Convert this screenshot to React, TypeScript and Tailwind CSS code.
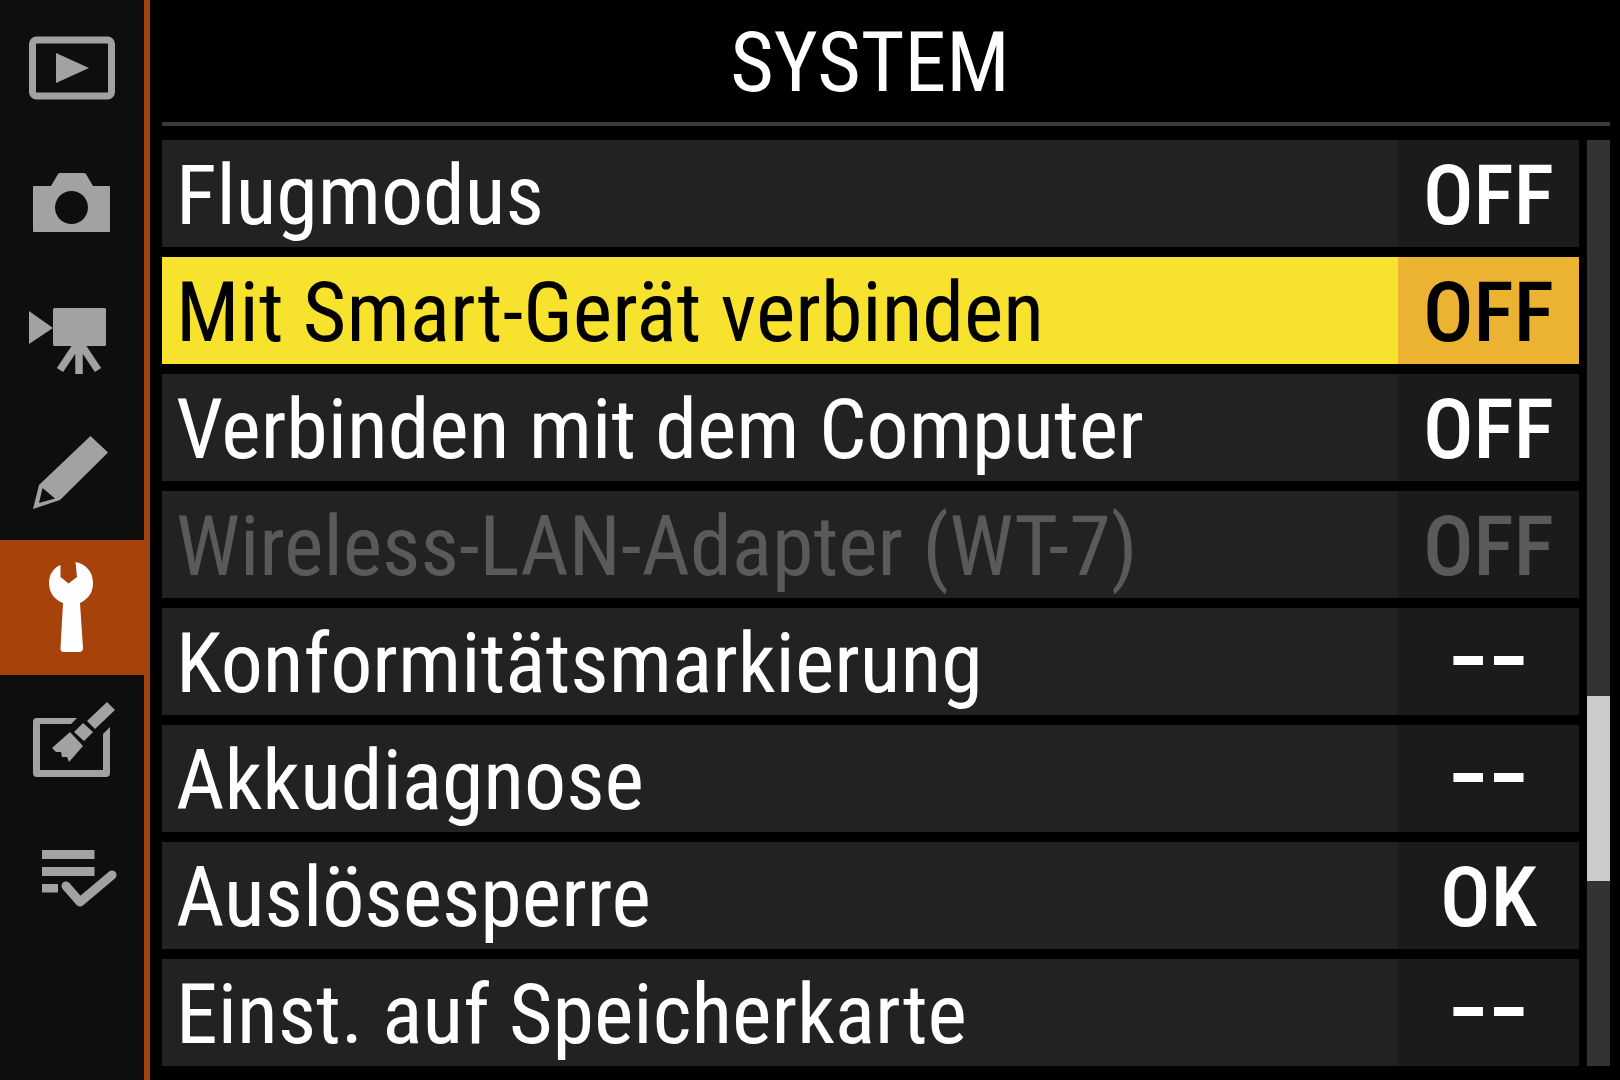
import type { ReactNode } from "react";

type Tab = { name: string; icon: ReactNode };
type Item = { label: string; value: string; state?: "selected" | "disabled" };

const tabs: Tab[] = [
  {
    name: "Wiedergabe",
    icon: (
      <>
        <rect x="32.500" y="40" width="79" height="56" rx="4" fill="none" stroke="currentColor" strokeWidth="7" />
        <path d="M56 53 89 68 56 83Z" />
      </>
    ),
  },
  {
    name: "Fotoaufnahme",
    icon: (
      <path
        fillRule="evenodd"
        d="M34 51H51L58 39Q59 38 60 38H83Q85 38 86 39L93 51H109Q110 51 110 52V96Q110 97 109 97H34Q33 97 33 96V52Q33 51 34 51ZM71.500 56A16.500 16.500 0 1 0 71.500 89A16.500 16.500 0 1 0 71.500 56Z"
      />
    ),
  },
  {
    name: "Videoaufnahme",
    icon: (
      <>
        <rect x="53" y="38" width="53" height="38" rx="1.500" />
        <path d="M29 41 53 58 29 74Z" />
        <path d="M79 72V104M78 73 60 100M80 73 98 100" fill="none" stroke="currentColor" strokeWidth="7.500" />
      </>
    ),
  },
  {
    name: "Individualfunktionen",
    icon: <path fillRule="evenodd" d="M33 104 39 80 90.500 31 108 47.500 60 95ZM42.500 83 39 98 55 93.500Z" />,
  },
  {
    name: "System",
    icon: (
      <path d="M60.500 25V37L68.500 43.500 77 37 75.500 22C86 24 93 32 93 43C93 53 88 59 80 63L83 108Q83 112 79 112H64Q60 112 60.500 108L63 63C55 60 49 53 49 43C49 35 53 28 60.500 25Z" />
    ),
  },
  {
    name: "Bildbearbeitung",
    icon: (
      <>
        <path d="M77 43H37Q33 43 33 47V98Q33 102 37 102H106Q110 102 110 98V52L103 59V95H40V49H71Z" />
        <path d="M107 27 115 35 95 54 87 46ZM83 48 93 57 84 66 74 57ZM70 57 83 71 69 87 67 82 62 82 61 77 56 77 52 73Z" />
      </>
    ),
  },
  {
    name: "Mein Menü",
    icon: (
      <>
        <path d="M42 40H94.500V49H42ZM42 57H94.500V66H42ZM42 74H58V82.500H42Z" />
        <path d="M66 76 80 92 112 65" fill="none" stroke="currentColor" strokeWidth="9" strokeLinecap="round" strokeLinejoin="round" />
      </>
    ),
  },
];

const items: Item[] = [
  { label: "Flugmodus", value: "OFF" },
  { label: "Mit Smart-Gerät verbinden", value: "OFF", state: "selected" },
  { label: "Verbinden mit dem Computer", value: "OFF" },
  { label: "Wireless-LAN-Adapter (WT-7)", value: "OFF", state: "disabled" },
  { label: "Konformitätsmarkierung", value: "--" },
  { label: "Akkudiagnose", value: "--" },
  { label: "Auslösesperre", value: "OK" },
  { label: "Einst. auf Speicherkarte", value: "--" },
];

function TabButton({ tab, active }: { tab: Tab; active: boolean }) {
  return (
    <button
      type="button"
      aria-label={tab.name}
      aria-current={active ? "page" : undefined}
      className={active ? "bg-[#a7420a] text-white" : "text-[#a2a2a2]"}
    >
      <svg viewBox="0 0 144 135" className="w-full" fill="currentColor" aria-hidden="true">
        {tab.icon}
      </svg>
    </button>
  );
}

function MenuRow({ item }: { item: Item }) {
  const selected = item.state === "selected";
  const disabled = item.state === "disabled";
  const tone = selected ? "bg-[#f7e22d] text-black" : disabled ? "bg-[#222222] text-[#5a5a5a]" : "bg-[#222222] text-white";
  const dash = item.value === "--";
  return (
    <li className="flex flex-1">
      <button type="button" disabled={disabled} className={`flex min-h-24 w-full items-stretch text-left ${tone}`}>
        <span className="flex flex-1 items-center pt-1 pl-3.5 text-[84px] leading-[88px] whitespace-nowrap">{item.label}</span>
        <span
          className={`flex w-[181px] items-center justify-center font-medium ${
            selected ? "bg-[#ebb331]" : "bg-[#1b1b1b]"
          } ${dash ? "pb-5 font-['DejaVu_Sans',sans-serif] text-[112px] leading-[80px]" : "pt-1 text-[84px] leading-[88px]"}`}
        >
          {item.value}
        </span>
      </button>
    </li>
  );
}

export default function App() {
  return (
    <div className="flex min-h-screen bg-black font-['Roboto_Condensed',Roboto,sans-serif] text-white">
      <nav aria-label="Menüs" className="grid w-[150px] shrink-0 grid-rows-8 border-r-[6px] border-[#a0430f] bg-[#0e0e0e]">
        {tabs.map((tab) => (
          <TabButton key={tab.name} tab={tab} active={tab.name === "System"} />
        ))}
      </nav>
      <main className="flex flex-1 flex-col pr-2.5 pb-3.5 pl-3">
        <header className="flex h-[126px] items-center justify-center border-b-4 border-[#3a3a3a] pt-1 pr-8">
          <h1 className="text-[84px] leading-[88px] font-normal">SYSTEM</h1>
        </header>
        <div className="flex flex-1 gap-2 pt-3.5">
          <ul className="flex flex-1 flex-col gap-2.5">
            {items.map((item) => (
              <MenuRow key={item.label} item={item} />
            ))}
          </ul>
          <div className="flex w-[23px] flex-col bg-[#333333]" aria-hidden="true">
            <div className="flex-3" />
            <div className="flex-1 bg-[#cbcbcb]" />
            <div className="flex-1" />
          </div>
        </div>
      </main>
    </div>
  );
}
